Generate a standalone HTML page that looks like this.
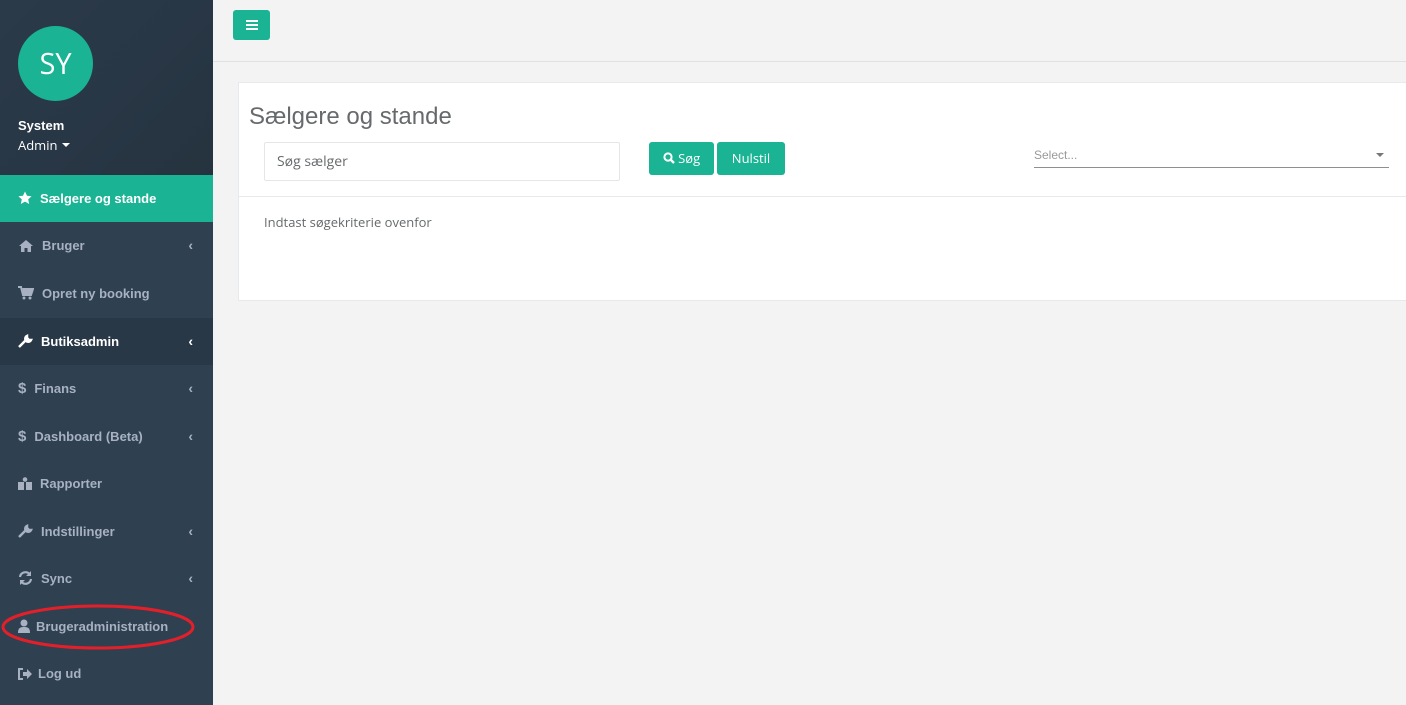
<!DOCTYPE html>
<html><head><meta charset="utf-8"><style>
*{box-sizing:border-box;margin:0;padding:0}
body{width:1406px;height:705px;overflow:hidden;background:#f3f3f4;font-family:"Open Sans","Liberation Sans",sans-serif;font-size:13px;color:#676a6c;position:relative}
#sb{position:absolute;left:0;top:0;width:213px;height:705px;background:#2f4050}
#hd{position:absolute;left:0;top:0;width:213px;height:175px;background:linear-gradient(135deg,#2b3a48 0%,#283746 50%,#26333f 100%)}
.av{position:absolute;left:18px;top:26px;width:75px;height:75px;border-radius:50%;background:#1ab394;color:#fff;font-size:29px;text-align:center;line-height:75px}
.nm{position:absolute;left:18px;top:117px;color:#fff;font-size:13px;font-weight:bold;font-family:"Liberation Sans",sans-serif;line-height:17px}
.nm2{position:absolute;left:18px;top:137px;color:#fff;font-size:13px;line-height:17px}
.nm2:after{content:"";display:inline-block;margin-left:5px;vertical-align:3px;border:4px solid transparent;border-top-color:#fff;border-bottom:0}
.it{position:absolute;left:0;width:213px;height:47px;color:#a7b1c2;font-weight:bold;font-size:13px;line-height:47px;padding-left:18px;font-family:"Liberation Sans",sans-serif}
.it svg{vertical-align:-2px;margin-right:8px}
.it .ch{position:absolute;right:20px;top:0;font-size:14px}
.act{background:#1ab394;color:#fff}
.dk{background:#293846;color:#fff}
#top{position:absolute;left:213px;top:0;right:0;height:62px;border-bottom:1px solid #e1e1e1}
.btn{position:absolute;background:#1ab394;color:#fff;border-radius:3px;text-align:center}
#card{position:absolute;left:238px;top:82px;width:1180px;height:219px;background:#fff;border:1px solid #e7eaec}
</style></head><body>
<div id="sb">
<div id="hd"></div>
<div class="av">SY</div>
<div class="nm">System</div>
<div class="nm2">Admin</div>
<div class="it act" style="top:175px;color:#fff"><svg width="14" height="14" viewBox="0 0 14 14"><path d="M7 0.5l2 4.3 4.6.5-3.4 3.1 1 4.6L7 10.6 2.8 13l1-4.6L.4 5.3l4.6-.5z" fill="#fff"/></svg>Sælgere og stande</div>
<div class="it" style="top:222px"><svg width="16" height="13" viewBox="0 0 16 13"><path d="M8 1L1 7h2v6h3.5V9h3v4H13V7h2z" fill="#a7b1c2"/></svg>Bruger<span class="ch">‹</span></div>
<div class="it" style="top:270px"><svg width="16" height="14" viewBox="0 0 16 14"><path d="M0 1h3l2 8h8l2-6H4.5" fill="none" stroke="#a7b1c2" stroke-width="2"/><circle cx="6" cy="12" r="1.5" fill="#a7b1c2"/><circle cx="12" cy="12" r="1.5" fill="#a7b1c2"/><rect x="5" y="3" width="9" height="6" fill="#a7b1c2"/></svg>Opret ny booking</div>
<div class="it dk" style="top:318px"><svg width="15" height="14" viewBox="0 0 15 14"><path d="M1 13l6-6M9 2a3 3 0 104 4l-2 0-2-2z" stroke="#fff" stroke-width="2.5" fill="#fff"/></svg>Butiksadmin<span class="ch" style="color:#fff">‹</span></div>
<div class="it" style="top:365px"><span style="margin-right:8px;font-size:15px">$</span>Finans<span class="ch">‹</span></div>
<div class="it" style="top:413px"><span style="margin-right:8px;font-size:15px">$</span>Dashboard (Beta)<span class="ch">‹</span></div>
<div class="it" style="top:460px"><svg width="14" height="13" viewBox="0 0 14 13"><circle cx="7" cy="2.5" r="2.3" fill="#a7b1c2"/><path d="M0 5h6v8H0zM8 5h6v8H8z" fill="#a7b1c2"/></svg>Rapporter</div>
<div class="it" style="top:508px"><svg width="15" height="14" viewBox="0 0 15 14"><path d="M1 13l6-6M9 2a3 3 0 104 4l-2 0-2-2z" stroke="#a7b1c2" stroke-width="2.5" fill="#a7b1c2"/></svg>Indstillinger<span class="ch">‹</span></div>
<div class="it" style="top:555px"><svg width="15" height="14" viewBox="0 0 15 14"><path d="M2 6a5.5 5.5 0 019.5-3M13 8a5.5 5.5 0 01-9.5 3" fill="none" stroke="#a7b1c2" stroke-width="2.2"/><path d="M13 0v5H8zM2 14V9h5z" fill="#a7b1c2"/></svg>Sync<span class="ch">‹</span></div>
<div class="it" style="top:603px"><svg width="12" height="14" viewBox="0 0 12 14" style="margin-right:6px"><circle cx="6" cy="4" r="3.5" fill="#a7b1c2"/><path d="M0 14c0-5 2-6 6-6s6 1 6 6z" fill="#a7b1c2"/></svg>Brugeradministration</div>
<div class="it" style="top:650px"><svg width="14" height="12" viewBox="0 0 14 12" style="margin-right:6px"><path d="M5 1H1v10h4" fill="none" stroke="#a7b1c2" stroke-width="2"/><path d="M5 4h4V1l5 5-5 5V8H5z" fill="#a7b1c2"/></svg>Log ud</div>
</div>
<svg style="position:absolute;left:0;top:600px" width="200" height="56"><ellipse cx="98" cy="27" rx="95" ry="21" fill="none" stroke="#e3202a" stroke-width="3"/></svg>
<div id="top"></div>
<div class="btn" style="left:233px;top:10px;width:37px;height:30px"><svg width="12" height="10" viewBox="0 0 12 10" style="margin-top:10px"><path d="M0 1h12M0 5h12M0 9h12" stroke="#fff" stroke-width="2"/></svg></div>
<div id="card">
<div style="position:absolute;left:10px;top:20px;font-size:24px;font-weight:300;color:#676a6c;font-family:'Liberation Sans',sans-serif">Sælgere og stande</div>
<div style="position:absolute;left:25px;top:59px;width:356px;height:39px;border:1px solid #e5e6e7;border-radius:2px;padding-left:12px;line-height:37px;font-size:14px;color:#676a6c">Søg sælger</div>
<div class="btn" style="left:410px;top:59px;width:65px;height:33px;line-height:33px;font-size:13px"><svg width="12" height="12" viewBox="0 0 12 12" style="vertical-align:-1px"><circle cx="5" cy="5" r="3.6" fill="none" stroke="#fff" stroke-width="2"/><path d="M7.5 7.5L11 11" stroke="#fff" stroke-width="2.4"/></svg> Søg</div>
<div class="btn" style="left:478px;top:59px;width:68px;height:33px;line-height:33px;font-size:13px">Nulstil</div>
<div style="position:absolute;left:795px;top:62px;width:355px;height:23px;border-bottom:1px solid #8f8f8f;font-size:12px;color:#999;line-height:20px;font-family:'Liberation Sans',sans-serif">Select...<span style="position:absolute;right:5px;top:8px;border:4px solid transparent;border-top-color:#777;border-bottom:0"></span></div>
<div style="position:absolute;left:0;top:113px;width:100%;border-top:1px solid #e7eaec"></div>
<div style="position:absolute;left:25px;top:130px;font-size:13px;color:#676a6c">Indtast søgekriterie ovenfor</div>
</div>
</body></html>
